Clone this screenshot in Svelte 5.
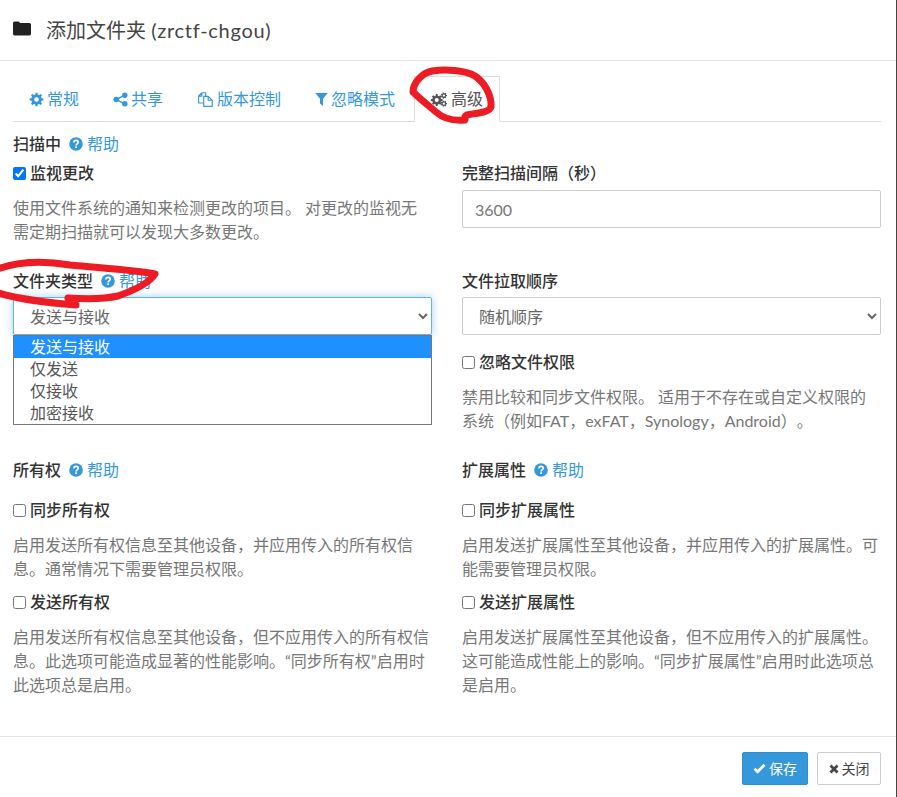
<script lang="ts">
	function gear(cx: number, cy: number, r: number, teeth = 8) {
		const outer = r;
		const inner = r * 0.76;
		let d = '';
		for (let i = 0; i < teeth; i++) {
			const a = (i / teeth) * Math.PI * 2;
			const w = Math.PI / teeth;
			const pts = [
				[inner, a - w * 0.62],
				[outer, a - w * 0.36],
				[outer, a + w * 0.36],
				[inner, a + w * 0.62]
			];
			for (const [rad, t] of pts) {
				d += `${d ? 'L' : 'M'}${(cx + rad * Math.cos(t)).toFixed(2)} ${(cy + rad * Math.sin(t)).toFixed(2)}`;
			}
		}
		return d + 'Z';
	}

	function hole(cx: number, cy: number, r: number) {
		return `M${cx - r} ${cy}a${r} ${r} 0 1 0 ${r * 2} 0a${r} ${r} 0 1 0 ${-r * 2} 0Z`;
	}

	const tabs = [
		{ label: '常规', icon: 'cog' },
		{ label: '共享', icon: 'share' },
		{ label: '版本控制', icon: 'files' },
		{ label: '忽略模式', icon: 'filter' },
		{ label: '高级', icon: 'cogs', active: true }
	];

	const folderTypes = ['发送与接收', '仅发送', '仅接收', '加密接收'];
</script>

{#snippet icon(name: string)}
	{#if name === 'cog'}
		<svg class="ico" viewBox="0 0 16 16"><path fill-rule="evenodd" fill="currentColor" d="{gear(8, 8, 7.4)}{hole(8, 8, 2.5)}" /></svg>
	{:else if name === 'share'}
		<svg class="ico" viewBox="0 0 16 16">
			<g fill="currentColor"><circle cx="12.6" cy="3.4" r="2.9" /><circle cx="12.6" cy="12.6" r="2.9" /><circle cx="3.4" cy="8" r="2.9" /></g>
			<path d="M12.6 3.4 3.4 8l9.2 4.6" fill="none" stroke="currentColor" stroke-width="1.5" />
		</svg>
	{:else if name === 'files'}
		<svg class="ico wide" viewBox="0 0 18 17">
			<path d="M6.5 12.5H1.2V4.6L4.8.9h4.4v3.6M4.8 1v3.6H1.2" fill="none" stroke="currentColor" stroke-width="1.3" />
			<path d="M7 5h5l4.6 4.4v6.9H7zM12 5v4.4h4.6" fill="none" stroke="currentColor" stroke-width="1.3" />
		</svg>
	{:else if name === 'filter'}
		<svg class="ico filter" viewBox="0 0 14 16"><path fill="currentColor" d="M.3 1h13.4L8.6 7.2V15L5.4 12.400V7.2z" /></svg>
	{:else if name === 'cogs'}
		<svg class="ico cogs" viewBox="0 0 18 16">
			<path fill-rule="evenodd" fill="currentColor" d="{gear(6.6, 8.6, 6.4)}{hole(6.6, 8.6, 2.1)}" />
			<path fill-rule="evenodd" fill="currentColor" d="{gear(14.2, 3.8, 3.4, 7)}{hole(14.2, 3.8, 1.2)}" />
			<path fill-rule="evenodd" fill="currentColor" d="{gear(14.2, 12.4, 3.4, 7)}{hole(14.2, 12.4, 1.2)}" />
		</svg>
	{/if}
{/snippet}

{#snippet help()}
	<a class="help" href="#help">
		<svg class="qmark" viewBox="0 0 14 14">
			<circle cx="7" cy="7" r="6.8" fill="currentColor" />
			<path d="M4.9 5.4c0-1.3 1-2 2.2-2s2.1.8 2.1 1.9c0 1.7-2.1 1.6-2.1 3.1" fill="none" stroke="#fff" stroke-width="1.6" />
			<rect x="6.2" y="9.3" width="1.8" height="1.7" fill="#fff" />
		</svg>
		帮助
	</a>
{/snippet}

<div class="modal">
	<header class="head">
		<svg class="folder" viewBox="0 0 18 15"><path fill="currentColor" d="M0 2a1.6 1.6 0 0 1 1.6-1.6h3.6a1.6 1.6 0 0 1 1.5 1l.3.6h9.4A1.6 1.6 0 0 1 18 3.6v9.2a1.6 1.6 0 0 1-1.6 1.6H1.6A1.6 1.6 0 0 1 0 12.800z" /></svg>
		<h4>添加文件夹 <span class="latin">(zrctf-chgou)</span></h4>
	</header>

	<div class="body">
		<ul class="tabs">
			{#each tabs as t}
				<li class:active={t.active}>
					{@render icon(t.icon)}
					<span>{t.label}</span>
				</li>
			{/each}
		</ul>

		<div class="title-row first"><b>扫描中</b>{@render help()}</div>

		<div class="cols scan">
			<div>
				<label class="check"><input type="checkbox" checked />监视更改</label>
				<p>使用文件系统的通知来检测更改的项目。 对更改的监视无需定期扫描就可以发现大多数更改。</p>
			</div>
			<div>
				<div class="label">完整扫描间隔（秒）</div>
				<input class="control" type="text" value="3600" />
			</div>
		</div>

		<div class="cols order">
			<div class="type-col">
				<div class="label">文件夹类型 {@render help()}</div>
				<select class="control focus">
					<option>发送与接收</option>
				</select>
				<ul class="dropdown">
					{#each folderTypes as f, i}
						<li class:sel={i === 0}>{f}</li>
					{/each}
				</ul>
			</div>
			<div>
				<div class="label">文件拉取顺序</div>
				<select class="control">
					<option>随机顺序</option>
				</select>
				<label class="check perm"><input type="checkbox" />忽略文件权限</label>
				<p>禁用比较和同步文件权限。 适用于不存在或自定义权限的系统（例如FAT，exFAT，Synology，Android）。</p>
			</div>
		</div>

		<div class="cols attrs">
			<div>
				<div class="title-row"><b>所有权</b>{@render help()}</div>
				<label class="check sync"><input type="checkbox" />同步所有权</label>
				<p>启用发送所有权信息至其他设备，并应用传入的所有权信息。通常情况下需要管理员权限。</p>
				<label class="check send"><input type="checkbox" />发送所有权</label>
				<p>启用发送所有权信息至其他设备，但不应用传入的所有权信息。此选项可能造成显著的性能影响。“同步所有权”启用时此选项总是启用。</p>
			</div>
			<div>
				<div class="title-row"><b>扩展属性</b>{@render help()}</div>
				<label class="check sync"><input type="checkbox" />同步扩展属性</label>
				<p>启用发送扩展属性至其他设备，并应用传入的扩展属性。可能需要管理员权限。</p>
				<label class="check send"><input type="checkbox" />发送扩展属性</label>
				<p>启用发送扩展属性至其他设备，但不应用传入的扩展属性。这可能造成性能上的影响。“同步扩展属性”启用时此选项总是启用。</p>
			</div>
		</div>
	</div>

	<footer class="foot">
		<button class="btn primary">
			<svg class="btn-ico" viewBox="0 0 14 12"><path d="M1.500 6.300 5 9.600 12.500 2" fill="none" stroke="currentColor" stroke-width="3" /></svg>
			保存
		</button>
		<button class="btn">
			<svg class="btn-ico small" viewBox="0 0 10 10"><path d="M1.500 1.500l7 7m0-7-7 7" fill="none" stroke="currentColor" stroke-width="2.800" /></svg>
			关闭
		</button>
	</footer>

	<!-- hand-drawn annotations over the screenshot -->
	<svg class="ink" viewBox="0 0 897 797">
		<path d="M413 92C413 83 422 73 432 71C445 69 465 70 475 76C484 82 492 95 491 107C489 113 475 113 467 115C463 117 466 119 465 120C455 121 445 120 436 112C428 105 420 99 413 92Z" />
		<path d="M-5 270C15 262 40 260 70 265C100 268 135 270 155 274C150 282 135 290 118 296C105 299 85 299 68 298" />
		<path d="M-5 292C20 300 50 303 76 305" />
	</svg>
</div>

<style>
	:global(body) {
		background: #fff;
	}
	.modal {
		position: relative;
		display: flex;
		flex-direction: column;
		width: 897px;
		height: 797px;
		box-sizing: border-box;
		border-right: 1px solid #444;
		background: #fff;
		color: #555;
		font-family: Lato, 'Noto Sans CJK SC', sans-serif;
		font-size: 16px;
		line-height: 24px;
		text-spacing-trim: space-all;
		overflow: hidden;
	}
	.head {
		display: flex;
		align-items: center;
		height: 60px;
		flex: none;
		padding-left: 13px;
		border-bottom: 1px solid #e5e5e5;
		color: #222;
	}
	.folder {
		width: 18px;
		height: 15px;
		margin-right: 15px;
		margin-top: -3px;
	}
	.head h4 {
		margin: 0;
		font-size: 20px;
		font-weight: 400;
		color: #444;
	}
	.latin {
		letter-spacing: 0.72px;
	}
	.body {
		flex: 1;
		padding: 15px 15px 0 13px;
	}
	.tabs {
		display: flex;
		height: 45px;
		margin: 0;
		padding: 0;
		list-style: none;
		border-bottom: 1px solid #ddd;
		color: #3498db;
	}
	.tabs li {
		display: flex;
		align-items: center;
		gap: 3px;
		height: 46px;
		box-sizing: border-box;
		padding: 0 15px;
		margin-right: 2px;
		border: 1px solid transparent;
	}
	.tabs li.active {
		margin-left: 1px;
		padding-right: 16px;
		color: #555;
		background: #fff;
		border-color: #ddd;
		border-bottom-color: #fff;
	}
	.ico {
		width: 15px;
		height: 15px;
	}
	.ico.wide {
		width: 17px;
	}
	.ico.cogs {
		width: 18px;
	}
	.ico.filter {
		width: 13px;
	}
	.title-row {
		display: flex;
		align-items: center;
		height: 24px;
		color: #333;
	}
	.title-row.first {
		margin-top: 10px;
	}
	b,
	.label,
	.check {
		font-weight: 500;
		color: #333;
	}
	.help {
		display: inline-flex;
		align-items: center;
		gap: 4px;
		margin-left: 8px;
		color: #3498db;
		font-weight: 400;
		text-decoration: none;
	}
	.qmark {
		width: 14px;
		height: 14px;
	}
	.cols {
		display: grid;
		grid-template-columns: 419px 419px;
		column-gap: 30px;
	}
	.scan {
		margin-top: 5px;
	}
	.order {
		margin-top: 25px;
	}
	.attrs {
		margin-top: 25px;
	}
	.label {
		display: flex;
		align-items: center;
		height: 24px;
		margin-bottom: 4px;
	}
	.scan .label {
		margin-bottom: 5px;
	}
	.check {
		display: flex;
		align-items: center;
		height: 24px;
	}
	.check input {
		width: 13px;
		height: 13px;
		margin: 0 4px 0 0;
	}
	.perm {
		margin-top: 15px;
	}
	.sync {
		margin-top: 16px;
	}
	.send {
		margin-top: 9px;
	}
	p {
		margin: 11px 0 0;
		color: #777;
	}
	.control {
		display: block;
		width: 100%;
		height: 38px;
		box-sizing: border-box;
		padding: 0 12px;
		border: 1px solid #ccc;
		border-radius: 2px;
		background: #fff;
		color: #777;
		font: inherit;
	}
	select.control {
		color: #666;
	}
	.focus {
		border-color: #66afe9;
		box-shadow: 0 0 8px rgba(102, 175, 233, 0.6);
	}
	.type-col {
		position: relative;
	}
	.dropdown {
		position: absolute;
		left: 0;
		right: 0;
		top: 66px;
		z-index: 2;
		margin: 0;
		padding: 0;
		list-style: none;
		background: #fff;
		border: 1px solid #767676;
		line-height: 22px;
		color: #555;
	}
	.dropdown li {
		padding-left: 16px;
		height: 22px;
	}
	.dropdown li.sel {
		background: #1e90ff;
		color: #fff;
	}
	.foot {
		display: flex;
		flex: none;
		height: 61px;
		justify-content: flex-end;
		align-items: flex-start;
		gap: 9px;
		padding: 15px 15px 0 0;
		box-sizing: border-box;
		border-top: 1px solid #e5e5e5;
	}
	.btn {
		display: inline-flex;
		align-items: center;
		justify-content: center;
		gap: 3px;
		width: 64px;
		height: 33px;
		box-sizing: border-box;
		padding: 0;
		border: 1px solid #ccc;
		border-radius: 2px;
		background: #fff;
		color: #444;
		font: inherit;
		font-size: 14px;
	}
	.btn.primary {
		width: 66px;
		background: #3498db;
		border-color: #2e8ece;
		color: #fff;
	}
	.btn-ico {
		width: 13px;
		height: 11px;
	}
	.btn-ico.small {
		width: 10px;
		height: 10px;
	}
	.ink {
		position: absolute;
		left: 0;
		top: 0;
		width: 897px;
		height: 797px;
		z-index: 5;
		pointer-events: none;
	}
	.ink path {
		fill: none;
		stroke: #ed1c24;
		stroke-width: 7;
		stroke-linecap: round;
		stroke-linejoin: round;
	}
</style>
